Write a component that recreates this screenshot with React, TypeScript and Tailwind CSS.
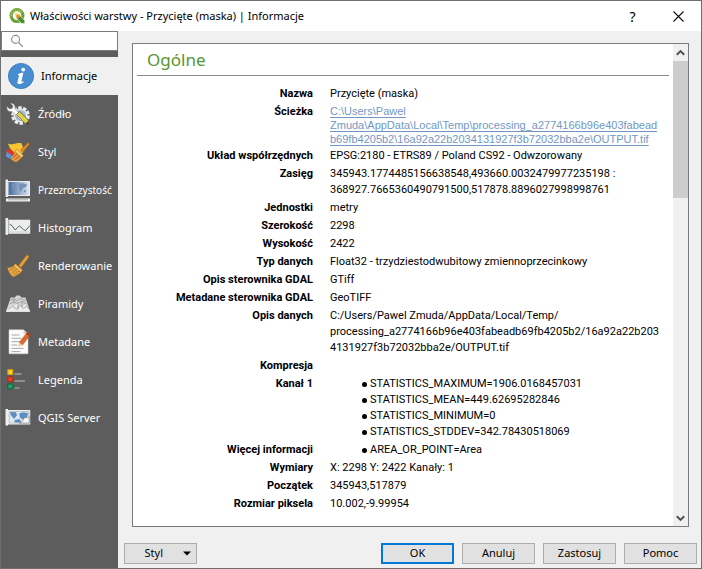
import { useState } from 'react';
import type { ReactNode } from 'react';

type Section = { id: string; label: string; icon: ReactNode; small?: boolean };

type Row = { label: string; value?: ReactNode };

const QgisLogo = () => (
  <svg width="16" height="16" viewBox="0 0 16 16" className="shrink-0" aria-hidden="true">
    <circle cx="8" cy="7.6" r="5.9" fill="none" stroke="#6aa338" strokeWidth="3.2" />
    <path d="M2.2 8.5a5.9 5.9 0 0 1 10.9-3.7" fill="none" stroke="#93c052" strokeWidth="1.4" />
    <path d="M6 5.2h3.6l1.4 1.4v3.4L6.8 9.8z" fill="#f3d65b" />
    <path d="M7.8 7.4h3l5 5.2v2.8h-3.4L7.6 10.4z" fill="#4f8c2c" stroke="#fff" strokeWidth=".6" />
    <path d="M7.4 7h3l1.2 1.2-2.8 2.6-1.4-1.4z" fill="#ee8d2f" />
  </svg>
);

const InfoIcon = () => (
  <svg width="28" height="28" viewBox="0 0 28 28" aria-hidden="true">
    <circle cx="14" cy="14" r="12.6" fill="#468dd2" stroke="#3577b8" strokeWidth=".8" />
    <circle cx="16.2" cy="7.6" r="1.9" fill="#fff" />
    <path
      d="M11 12.2c2-1 3.6-1.4 5.4-1.4l-2 8.2c-.2 1 .4 1.2 2 .2l.4.9c-1.8 1.5-3.2 2-4.6 2-1.5 0-2-.9-1.6-2.6l1.5-6.2-1.4-.1z"
      fill="#fff"
    />
  </svg>
);

const SourceIcon = () => (
  <svg width="26" height="26" viewBox="0 0 26 26" aria-hidden="true">
    <circle cx="15.5" cy="14.5" r="7.8" fill="none" stroke="#eceff1" strokeWidth="3" strokeDasharray="3.4 1.5" />
    <circle cx="15.5" cy="14.5" r="6.2" fill="#a9b8d0" stroke="#e8ebee" strokeWidth="1.4" />
    <path
      d="M5.3 2.3 8 4.8l-.7 2.5-2.7.6L2 5.5c-.7 3.4 1.8 5.9 5.1 5l9 9.2 3-2.9-9.2-9.1c.8-3.4-1.4-5.8-4.6-5.4z"
      fill="#fff"
      stroke="#777"
      strokeWidth=".6"
    />
    <path d="m11.5 13.5 3.3-3 8.3 8.4.9 4.3-4.3-1.2z" fill="#eee24c" stroke="#55534a" strokeWidth=".8" />
    <path d="m12.9 12.2 8.5 9.2M14 11.4l8.7 8.9" stroke="#b9a92e" strokeWidth=".6" />
    <path d="m22.7 20.3 1.3 2.9-3-.8z" fill="#333" />
  </svg>
);

const StyleIcon = () => (
  <svg width="26" height="26" viewBox="0 0 26 26" aria-hidden="true">
    <path d="M3 4.8C7.5 6.5 11 2.8 16.5 4.2l3 7.8-6.2 6L5.4 10z" fill="#f6c630" />
    <path d="m4.4 9 9 8.5-5 3.6C5.3 18.6 3 15 1 13z" fill="#d8392d" />
    <path d="M1.8 12.6c3 2.7 6 4.5 8.6 6.5l-2.7 2.1C5 19.6 2.6 18.6.8 17.6z" fill="#5b97d5" />
    <path d="m10.3 12.3 6.5 6.4-5.5 4.6c-2-.5-4.2-2-5.2-3.4z" fill="#e7963c" />
    <path d="m8.3 18.6 4.4-4.2m-2.6 6.3 4.7-4.1" stroke="#ad5c1a" strokeWidth=".9" />
    <path d="m12 10.2 6.5 6.6-2 2-6.7-6.5z" fill="#f9cf74" stroke="#aa6a21" strokeWidth=".6" />
    <path d="m15.7 11 7-7.1c.8-.8 2.4.7 1.6 1.6l-6.5 7.8z" fill="#df8e32" stroke="#9c5715" strokeWidth=".7" />
  </svg>
);

const TransparencyIcon = () => (
  <svg width="26" height="26" viewBox="0 0 26 26" aria-hidden="true">
    <defs>
      <linearGradient id="fade" x1="0" x2="1">
        <stop offset="0" stopColor="#486c9e" />
        <stop offset="1" stopColor="#dce5f1" />
      </linearGradient>
    </defs>
    <path d="M.5 2.5H3V4h22v15H3v1H.5z" fill="#e9ecef" />
    <path d="M3.5 5h20.6v13H3.5z" fill="url(#fade)" />
    <path d="m7 7 3 1 1 2-2 3-2-3zm7 0 4-.8 4 1.3-1 2.5-3 1-2 4-2-3zm5 6 2 .6-.5 2-1.8-.6z" fill="#7790b5" />
    <path d="M1 21.5h24v3H1z" fill="#f4f4f4" />
    <path d="M3 22.8h20" stroke="#8e8e8e" strokeWidth=".7" />
  </svg>
);

const HistogramIcon = () => (
  <svg width="26" height="26" viewBox="0 0 26 26" aria-hidden="true">
    <path d="M.5 3H3v1.8h22.2v14H3v1H.5z" fill="#eceeed" />
    <path d="M3.6 4.8v14" stroke="#9da3a5" strokeWidth=".8" />
    <path d="m4.5 9.2 2.4 1.3 3.3 4.5 4.2-4.2 4.3 4 2 .8 4-5" fill="none" stroke="#566064" strokeWidth="1" />
    <path d="M4.5 17h20" stroke="#c7cccc" strokeWidth=".8" />
  </svg>
);

const RenderIcon = () => (
  <svg width="26" height="26" viewBox="0 0 26 26" aria-hidden="true">
    <path d="m13.7 12.2 7.8-9.7c1-1.1 3.1.5 2.2 1.8l-7.6 10.4z" fill="#e9a23b" stroke="#a66a1b" strokeWidth=".7" />
    <path d="m9 13.3 7 6.2-7.3 4.6C5.5 22.2 3.2 18.6 2.6 15z" fill="#eaae4d" stroke="#a77326" strokeWidth=".5" />
    <path d="m5 15.5 6.3 6M7 14.8l6 5.3M4 18l5-3.6M6.2 20.7l5.5-4.4M8 22.9l6-4.8" stroke="#bd7c25" strokeWidth=".8" />
    <path d="m10.5 10.8 7.1 6.3-1.7 2.4-7.6-6.5z" fill="#f1bd61" stroke="#a66d1d" strokeWidth=".7" />
  </svg>
);

const PyramidsIcon = () => (
  <svg width="26" height="26" viewBox="0 0 26 26" aria-hidden="true">
    <path d="M5.7 6.5h4l1.8-2h3.2l1.8 2h4L25.3 21H.8z" fill="#d4d5d5" />
    <path d="m1 20.5 4.8-7 3 1.7 3.5-2.7 3.8 2.7 4.8-2 4.2 7.3z" fill="#ececec" />
    <path
      d="m5.3 9.7 3.8-2 3 2 3.6-2.2 5.2 2.2M4.5 13l4.3-2.5 4 2 4-2.4 5 3M3.4 18l4-3 4 3 3.8-3.5 3.4 3 3-2.7 2.3 3.4M9 7.7v5m4 0v6m4.2-8v5"
      fill="none"
      stroke="#939696"
      strokeWidth=".8"
    />
  </svg>
);

const MetadataIcon = () => (
  <svg width="26" height="26" viewBox="0 0 26 26" aria-hidden="true">
    <path d="M4 .8h14.5L23 5v19.8H4z" fill="#fbfbfb" stroke="#d5d5d5" strokeWidth=".5" />
    <path d="M18.5.8V5H23z" fill="#cfd2d4" />
    <path d="M6.5 6h8m-8 3.3h10m-10 3.3h8m-8 3.4h6m-6 3.4h12m-12 3.2h9" stroke="#a7abad" strokeWidth="1" />
    <path d="m22.3 3.2 3.2 2.4-8 10.5-3.3-2.5z" fill="#df6a2d" stroke="#a6481b" strokeWidth=".5" />
    <path d="m14.2 13.6 3.3 2.5-4.3 1.8z" fill="#f0cba2" />
    <path d="m22.3 3.2 3.2 2.4-1.3 1.7L21 4.8z" fill="#b5391e" />
  </svg>
);

const LegendIcon = () => (
  <svg width="26" height="26" viewBox="0 0 26 26" aria-hidden="true">
    <path d="M2.8 2.7h5v4.8h-5z" fill="#fcd12e" stroke="#d79c10" strokeWidth="1" />
    <path d="M2.8 9.8h5v4.8h-5z" fill="#e84320" stroke="#a82b14" strokeWidth="1" />
    <path d="M2.8 17h5v4.8h-5z" fill="#23a066" stroke="#08693c" strokeWidth="1" />
    <path d="M9.5 7h7m-7 7h10.5m-10.5 7.2h5" stroke="#8e9091" strokeWidth="1.8" />
  </svg>
);

const ServerIcon = () => (
  <svg width="26" height="26" viewBox="0 0 26 26" aria-hidden="true">
    <path d="M.5 4H3v1h22.2v14.5H3v1H.5z" fill="#eff1ee" />
    <path d="M4.2 6.5h19.6V18H4.2z" fill="#dfe8ee" stroke="#a5abae" strokeWidth=".6" />
    <path d="m5 7 6 .3 1 3-3 3.6-3-3.5zm9.2 1.6L18 7.3l5.3 1-1.6 4.2-4.5 2.1-2.3-2.1zM9.5 15l5-1 2 3.5h-7z" fill="#5c8fc0" />
    <path d="M14 18c3.5-1 5-3 5.3-5.5 2 .4 3.8.2 4.9-.8v6.4z" fill="#f9faf9" stroke="#7b8184" strokeWidth=".7" />
  </svg>
);

const SearchIcon = () => (
  <svg width="14" height="14" viewBox="0 0 14 14" className="shrink-0" aria-hidden="true">
    <circle cx="5.6" cy="5.4" r="4" fill="none" stroke="#8c8c8c" strokeWidth="1.1" />
    <path d="m8.6 8.5 4.3 4.3" stroke="#8c8c8c" strokeWidth="1.2" />
  </svg>
);

const sections: Section[] = [
  { id: 'info', label: 'Informacje', icon: <InfoIcon /> },
  { id: 'source', label: 'Źródło', icon: <SourceIcon /> },
  { id: 'style', label: 'Styl', icon: <StyleIcon /> },
  { id: 'transparency', label: 'Przezroczystość', icon: <TransparencyIcon />, small: true },
  { id: 'histogram', label: 'Histogram', icon: <HistogramIcon /> },
  { id: 'render', label: 'Renderowanie', icon: <RenderIcon /> },
  { id: 'pyramids', label: 'Piramidy', icon: <PyramidsIcon /> },
  { id: 'metadata', label: 'Metadane', icon: <MetadataIcon /> },
  { id: 'legend', label: 'Legenda', icon: <LegendIcon /> },
  { id: 'server', label: 'QGIS Server', icon: <ServerIcon /> },
];

const Stats = ({ items }: { items: string[] }) => (
  <ul className="pl-8">
    {items.map(item => (
      <li key={item} className="flex items-center gap-[3px]">
        <span className="size-[5px] rounded-full bg-black" />
        {item}
      </li>
    ))}
  </ul>
);

const rows: Row[] = [
  { label: 'Nazwa', value: 'Przycięte (maska)' },
  {
    label: 'Ścieżka',
    value: (
      <a
        href="#output"
        className="block font-['Liberation_Sans',sans-serif] leading-[14px] text-[#7397c3] underline underline-offset-2">
        C:\Users\Pawel
        <br />
        Zmuda\AppData\Local\Temp\processing_a2774166b96e403fabead
        <br />
        b69fb4205b2\16a92a22b2034131927f3b72032bba2e\OUTPUT.tif
      </a>
    ),
  },
  { label: 'Układ współrzędnych', value: 'EPSG:2180 - ETRS89 / Poland CS92 - Odwzorowany' },
  {
    label: 'Zasięg',
    value: (
      <>
        345943.1774485156638548,493660.0032479977235198 :
        <br />
        368927.7665360490791500,517878.8896027998998761
      </>
    ),
  },
  { label: 'Jednostki', value: 'metry' },
  { label: 'Szerokość', value: '2298' },
  { label: 'Wysokość', value: '2422' },
  { label: 'Typ danych', value: 'Float32 - trzydziestodwubitowy zmiennoprzecinkowy' },
  { label: 'Opis sterownika GDAL', value: 'GTiff' },
  { label: 'Metadane sterownika GDAL', value: 'GeoTIFF' },
  {
    label: 'Opis danych',
    value: (
      <>
        C:/Users/Pawel Zmuda/AppData/Local/Temp/
        <br />
        processing_a2774166b96e403fabeadb69fb4205b2/16a92a22b203
        <br />
        4131927f3b72032bba2e/OUTPUT.tif
      </>
    ),
  },
  { label: 'Kompresja' },
  {
    label: 'Kanał 1',
    value: (
      <Stats
        items={[
          'STATISTICS_MAXIMUM=1906.0168457031',
          'STATISTICS_MEAN=449.62695282846',
          'STATISTICS_MINIMUM=0',
          'STATISTICS_STDDEV=342.78430518069',
        ]}
      />
    ),
  },
  { label: 'Więcej informacji', value: <Stats items={['AREA_OR_POINT=Area']} /> },
  { label: 'Wymiary', value: 'X: 2298 Y: 2422 Kanały: 1' },
  { label: 'Początek', value: '345943,517879' },
  { label: 'Rozmiar piksela', value: '10.002,-9.99954' },
];

const ScrollArrow = ({ label, d }: { label: string; d: string }) => (
  <button type="button" aria-label={label} className="flex h-[17px] w-full shrink-0 items-center justify-center">
    <svg width="9" height="8" viewBox="0 0 9 8" aria-hidden="true">
      <path d={d} fill="none" stroke="#505050" strokeWidth="2" />
    </svg>
  </button>
);

const buttonClass = 'h-[21px] w-[73px] border border-[#adadad] bg-[#e1e1e1]';

const App = () => {
  const [active, setActive] = useState('info');
  const [query, setQuery] = useState('');

  return (
    <div className="flex min-h-screen flex-col border border-[#6f6f6f] bg-[#f0f0f0] font-['Noto_Sans',sans-serif] text-[11px] text-black">
      <header className="flex h-[30px] shrink-0 items-center bg-white pl-2">
        <QgisLogo />
        <h1 className="grow pl-[5px]">Właściwości warstwy - Przycięte (maska) | Informacje</h1>
        <button type="button" aria-label="Pomoc kontekstowa" className="w-[45px] text-[14px]">
          ?
        </button>
        <button type="button" aria-label="Zamknij" className="flex w-[46px] justify-center">
          <svg width="11" height="11" viewBox="0 0 11 11" aria-hidden="true">
            <path d="m.5.5 10 10m0-10-10 10" stroke="#111" strokeWidth="1.1" />
          </svg>
        </button>
      </header>

      <div className="flex grow">
        <aside className="flex w-[117px] shrink-0 flex-col bg-[#5d5d5d]">
          <label className="mb-[6px] flex h-5 items-center border border-[#7a7a7a] bg-white pl-2">
            <SearchIcon />
            <input
              type="text"
              aria-label="Szukaj"
              value={query}
              onChange={e => setQuery(e.target.value)}
              className="w-full min-w-0 px-1 outline-none"
            />
          </label>
          <nav>
            {sections.map(section => (
              <button
                key={section.id}
                type="button"
                onClick={() => setActive(section.id)}
                className={
                  section.id === active
                    ? 'flex h-[38px] w-full items-center gap-[6px] bg-[#f0f0f0] pl-[6px] text-left text-black'
                    : 'flex h-[38px] w-full items-center gap-[7px] pl-1 text-left text-white'
                }>
                <span className="shrink-0">{section.icon}</span>
                <span className={section.small ? 'pt-px text-[10px]' : 'pt-px'}>{section.label}</span>
              </button>
            ))}
          </nav>
        </aside>

        <main className="flex min-w-0 grow flex-col pt-3">
          <section className="mr-3 ml-[14px] flex grow border border-[#7a7a7a] bg-white">
            <div className="min-w-0 grow pl-1 font-['Roboto',sans-serif] leading-4">
              <h2 className="mr-1 border-b border-[#8c8c8c] pt-px pb-px pl-[10px] font-['Noto_Sans',sans-serif] text-[17px] leading-[29px] text-[#589632]">
                Ogólne
              </h2>
              <table className="mt-[9px] w-full">
                <tbody>
                  {rows.map(row => (
                    <tr key={row.label} className="align-top">
                      <th scope="row" className="w-[193px] py-px pr-[17px] text-right font-bold">
                        {row.label}
                      </th>
                      <td className="py-px">{row.value}</td>
                    </tr>
                  ))}
                </tbody>
              </table>
            </div>
            <div className="flex w-[15px] shrink-0 flex-col bg-[#f0f0f0]">
              <ScrollArrow label="W górę" d="m.8 5.8 3.7-3.7 3.7 3.7" />
              <div className="grow">
                <div className="h-[137px] bg-[#cdcdcd]" />
              </div>
              <ScrollArrow label="W dół" d="m.8 2.2 3.7 3.7 3.7-3.7" />
            </div>
          </section>

          <footer className="flex gap-2 pt-4 pr-1 pb-1 pl-[6px]">
            <button type="button" className={`${buttonClass} mr-auto flex items-center justify-end gap-5 pr-[5px]`}>
              Styl
              <svg width="8" height="5" viewBox="0 0 8 5" aria-hidden="true">
                <path d="M0 .5h8l-4 4z" />
              </svg>
            </button>
            <button type="button" className="h-[21px] w-[73px] border-2 border-[#0078d7] bg-[#e1e1e1]">
              OK
            </button>
            <button type="button" className={buttonClass}>
              Anuluj
            </button>
            <button type="button" className={buttonClass}>
              Zastosuj
            </button>
            <button type="button" className={buttonClass}>
              Pomoc
            </button>
          </footer>
        </main>
      </div>
    </div>
  );
};

export default App;
